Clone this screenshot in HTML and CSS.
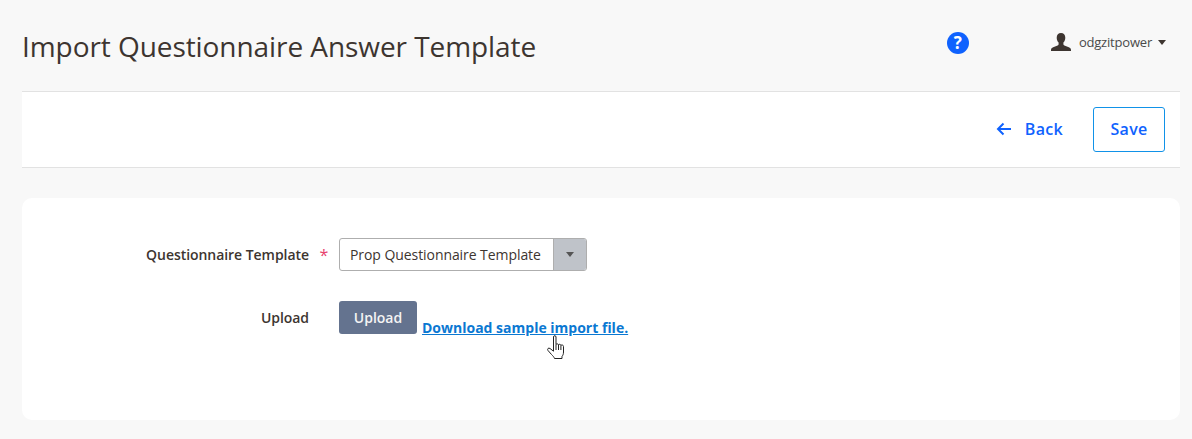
FILE: index.html
```html
<!DOCTYPE html>
<html lang="en">
<head>
  <meta charset="UTF-8">
  <title>Import Questionnaire Answer Template</title>
  <link rel="stylesheet" href="styles.css">
</head>
<body>
  <!-- Page Header -->
  <header class="page-header">
    <h1>Import Questionnaire Answer Template</h1>
    <div class="header-tools">
      <a class="help-btn" href="#">?</a>
      <div class="user-menu">
        <svg class="user-icon" width="20" height="18" viewBox="0 0 20 18">
          <path fill="#3d3530" d="M10 0c2.700 0 4.300 2 4.300 4.800 0 2-.8 3.800-1.900 4.800v1.600c0 .6.4 1 1 1.300l4.400 1.700c1.300.5 2.200 1.400 2.200 2.800V18H0v-.9c0-1.400.9-2.300 2.200-2.800l4.400-1.700c.6-.3 1-.7 1-1.300V9.600C6.500 8.600 5.700 6.800 5.700 4.800 5.700 2 7.300 0 10 0z"/>
        </svg>
        <span class="user-name">odgzitpower</span>
        <span class="caret"></span>
      </div>
    </div>
  </header>

  <!-- Action Bar -->
  <div class="action-bar">
    <a class="back-link" href="#">
      <svg width="16" height="14" viewBox="0 0 16 14">
        <path fill="none" stroke="#0f62fe" stroke-width="2" d="M15 7H2M7.500 1.500L2 7l5.500 5.500"/>
      </svg>
      Back
    </a>
    <button class="save-btn">Save</button>
  </div>

  <!-- Form Card -->
  <div class="card">
    <div class="form-row">
      <label class="form-label">Questionnaire Template</label>
      <span class="required">*</span>
      <div class="select-box">
        <span class="select-value">Prop Questionnaire Template</span>
        <span class="select-arrow"><span class="arrow-down"></span></span>
      </div>
    </div>
    <div class="form-row upload-row">
      <label class="form-label">Upload</label>
      <span class="required"></span>
      <button class="upload-btn">Upload</button>
      <div class="sample-wrap">
        <a class="sample-link" href="#">Download sample import file.</a>
        <svg class="hand-cursor" width="18" height="25" viewBox="0 0 18 25">
          <path fill="#fff" stroke="#222" stroke-width="1" stroke-linejoin="round" d="M6.500 2c0-1.800 2.500-1.800 2.500 0v7.500c.6-1 2.300-.8 2.500.3.600-.8 2.200-.6 2.400.5.700-.6 2.600-.4 2.600 1.200v5.500c0 2.500-.8 3.500-1.500 4.500v2H7.500c-.5-1.500-1.500-2.500-3-4L1 15.500c-1.200-1.500.6-3.200 2-2l3.500 2.700z"/>
          <path fill="none" stroke="#222" stroke-width="1" d="M9 9.500V15M11.500 9.800V15M13.900 10.300V15"/>
        </svg>
      </div>
    </div>
  </div>
</body>
</html>
```

FILE: styles.css
```css
/* General Styles */
* {
  margin: 0;
  padding: 0;
  box-sizing: border-box;
  font-family: 'Open Sans', sans-serif;
}

html, body {
  height: 100%;
  overflow: hidden;
}

body {
  background-color: #f8f8f8;
  color: #3d3530;
  padding: 0 12px 0 22px;
}

/* Page Header */
.page-header {
  height: 91px;
  display: flex;
  justify-content: space-between;
  align-items: flex-start;
}

.page-header h1 {
  font-size: 28px;
  font-weight: 400;
  line-height: 38px;
  margin-top: 27px;
  letter-spacing: -0.07px;
  color: #3d3530;
}

.header-tools {
  display: flex;
  align-items: center;
  margin-top: 32px;
  padding-right: 14px;
}

.help-btn {
  width: 22px;
  height: 22px;
  border-radius: 50%;
  background-color: #0f62fe;
  color: white;
  font-size: 17px;
  font-weight: 700;
  line-height: 22px;
  text-align: center;
  text-decoration: none;
  margin-right: 82px;
}

.user-menu {
  display: flex;
  align-items: center;
  margin-top: -3px;
}

.user-icon {
  margin-right: 8px;
}

.user-name {
  font-size: 13px;
  color: #4a4a4a;
  margin-right: 6px;
  letter-spacing: -0.2px;
}

.caret {
  width: 0;
  height: 0;
  margin-top: 2px;
  border-left: 4px solid transparent;
  border-right: 4px solid transparent;
  border-top: 5px solid #3d3530;
}

/* Action Bar */
.action-bar {
  height: 77px;
  background: #ffffff;
  border-top: 1px solid #e2e2e2;
  border-bottom: 1px solid #e2e2e2;
  display: flex;
  justify-content: flex-end;
  align-items: center;
  padding-right: 15px;
  padding-bottom: 1px;
}

.back-link {
  display: flex;
  align-items: center;
  gap: 13px;
  color: #0f62fe;
  font-size: 16px;
  font-weight: 600;
  letter-spacing: 0.3px;
  text-decoration: none;
  margin-right: 30px;
}

.save-btn {
  width: 72px;
  height: 45px;
  background: #ffffff;
  border: 1px solid #1192e8;
  border-radius: 3px;
  color: #0f62fe;
  font-size: 16px;
  font-weight: 600;
  letter-spacing: 0.3px;
}

/* Form Card */
.card {
  background: #ffffff;
  border-radius: 10px;
  margin-top: 30px;
  height: 222px;
  padding-top: 40px;
}

.form-row {
  display: flex;
  align-items: center;
  height: 33px;
}

.upload-row {
  margin-top: 30px;
}

.form-label {
  width: 287px;
  text-align: right;
  font-size: 14px;
  font-weight: 600;
  letter-spacing: -0.05px;
  color: #3d3530;
}

.required {
  width: 30px;
  text-align: center;
  color: #e8436e;
  font-size: 16px;
  font-weight: 400;
}

.select-box {
  width: 248px;
  height: 33px;
  display: flex;
  border: 1px solid #aeaeae;
  border-radius: 3px;
  overflow: hidden;
}

.select-value {
  flex: 1;
  padding-left: 10px;
  font-size: 14px;
  line-height: 31px;
  letter-spacing: -0.07px;
  color: #3d3530;
}

.select-arrow {
  width: 33px;
  background-color: #bfc3c9;
  border-left: 1px solid #aeaeae;
  display: flex;
  align-items: center;
  justify-content: center;
}

.arrow-down {
  width: 0;
  height: 0;
  border-left: 4px solid transparent;
  border-right: 4px solid transparent;
  border-top: 5px solid #555;
}

.upload-btn {
  width: 78px;
  height: 33px;
  background-color: #64738f;
  border: none;
  border-radius: 3px;
  color: #f4f4f4;
  font-size: 14px;
  font-weight: 600;
}

.sample-wrap {
  position: relative;
  margin-left: 5px;
  align-self: flex-end;
  line-height: 19px;
  margin-bottom: -3px;
}

.sample-link {
  color: #0a78d2;
  font-size: 14px;
  font-weight: 700;
}

.hand-cursor {
  position: absolute;
  left: 125px;
  top: 17px;
}
```
